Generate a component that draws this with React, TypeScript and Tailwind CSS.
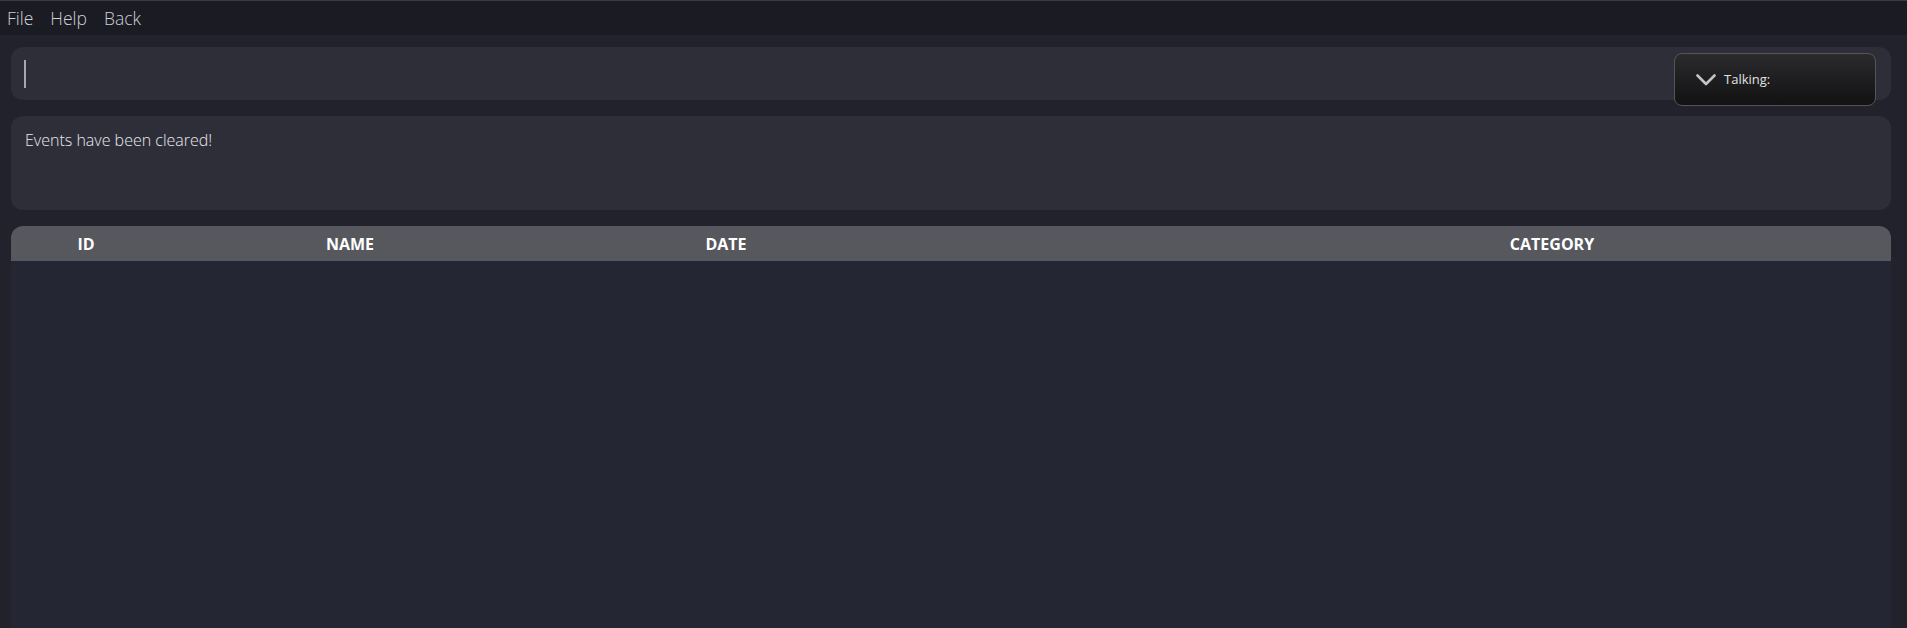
const columns = [
  { key: 'id', label: 'ID' },
  { key: 'name', label: 'NAME' },
  { key: 'date', label: 'DATE' },
  { key: 'time', label: '' },
  { key: 'category', label: 'CATEGORY' },
];

const App = () => {
  return (
    <div className="flex h-screen w-full flex-col overflow-hidden bg-[#22222c] font-['Open_Sans','Noto_Sans',sans-serif]">
      {/* menu bar */}
      <nav className="flex h-[35px] shrink-0 items-center gap-[17px] border-t border-[#3b3b45] bg-[#1b1b24] pl-[7px] text-[17.5px] font-light text-[#cfd0d6]">
        <span>File</span>
        <span>Help</span>
        <span>Back</span>
      </nav>

      <main className="flex min-h-0 flex-1 flex-col px-[11px] pt-[12px] pr-[16px]">
        {/* command box */}
        <div className="relative flex h-[53px] shrink-0 items-center rounded-xl bg-[#2e2e39] pl-[13px]">
          <span className="h-[28px] w-[2px] bg-[#a7a7b0]" />
          <div className="absolute right-[15px] top-[6px] z-10 flex h-[53px] w-[202px] items-center gap-[8px] rounded-lg border border-[#54545a] bg-gradient-to-b from-[#2b2b2d] to-[#121213] pl-[21px] text-[13px] text-[#e2e2e2]">
            <svg width="20" height="12" viewBox="0 0 20 12" fill="none" aria-hidden="true">
              <path d="M1.5 1.5 10 10l8.5-8.5" stroke="#c4c4c8" strokeWidth="2.6" strokeLinecap="round" strokeLinejoin="round" />
            </svg>
            <span>Talking:</span>
          </div>
        </div>

        {/* result display */}
        <div className="mt-[16px] h-[94px] shrink-0 rounded-xl bg-[#2e2e39] px-[14px] pt-[12px]">
          <p className="text-[16px] font-light text-[#e8e9f0]">Events have been cleared!</p>
        </div>

        {/* event list */}
        <div className="mt-[16px] flex min-h-0 flex-1 flex-col">
          <div className="grid h-[35px] shrink-0 grid-cols-[150px_378px_374px_300px_1fr] items-center rounded-t-xl bg-[#57585e] text-[16px] font-bold text-white">
            {columns.map((col) => (
              <span key={col.key} className="text-center">{col.label}</span>
            ))}
          </div>
          <div className="flex-1 bg-[#242633]" />
        </div>
      </main>
    </div>
  );
};

export default App;
